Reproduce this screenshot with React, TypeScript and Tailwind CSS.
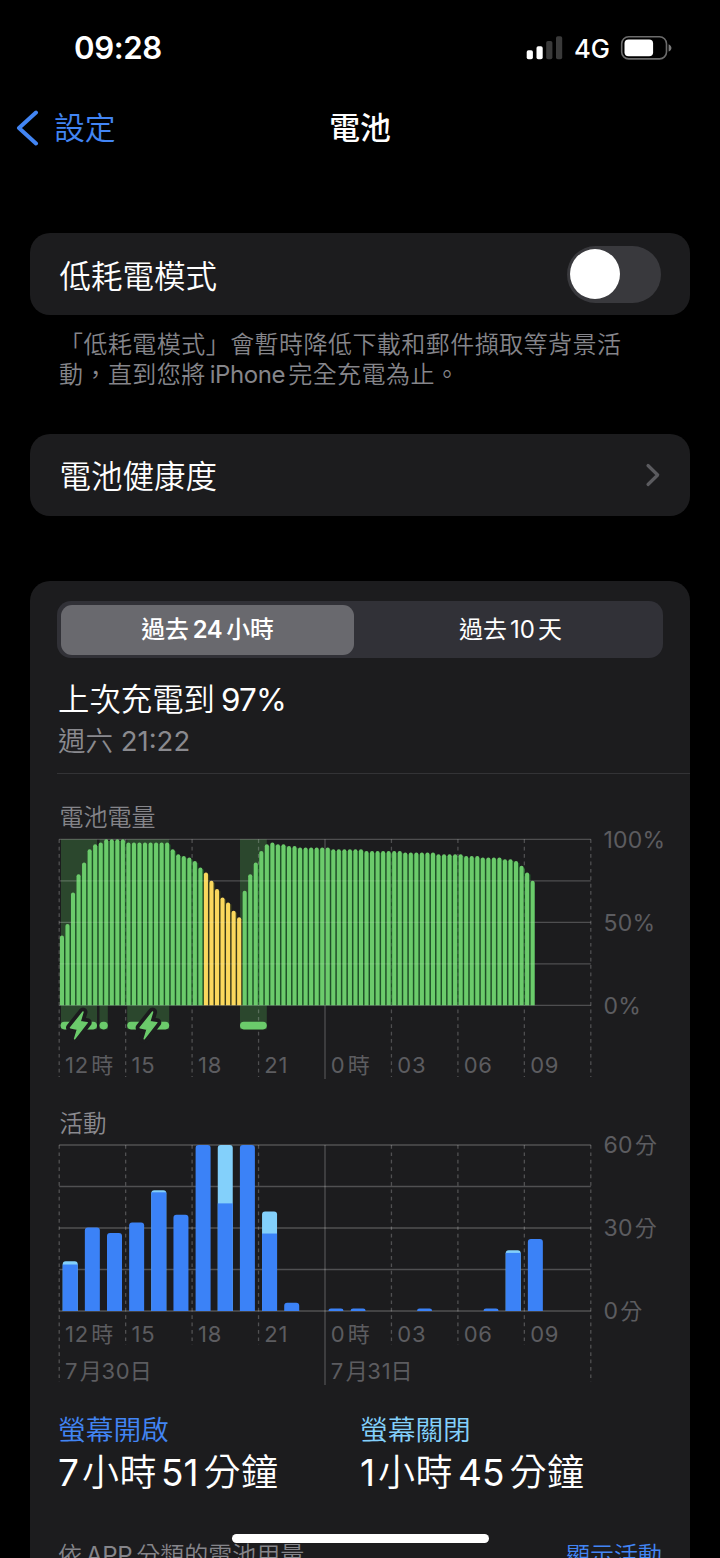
import type { ReactNode } from 'react';

const LEFT = 29.2;
const PLOT_W = 531.6;
const PLOT_H = 166;
const STEP = PLOT_W / 8;

const repeat = (value: number, count: number): number[] => Array(count).fill(value);

const levels: number[] = [
  42, 49, 68, 79, 86, 94, 97, 98, ...repeat(100, 4), ...repeat(98, 8),
  94, 91, 90, 89, 87, 83, 80, 75, 70, 65, 62, 57, 53,
  69, 79, 86, 93, 97, 98, 97, 97, ...repeat(96, 2), ...repeat(95, 6), ...repeat(94, 6),
  ...repeat(93, 7), ...repeat(92, 6), ...repeat(91, 5), ...repeat(90, 3), ...repeat(89, 4),
  ...repeat(88, 2), 87, 84, 80, 75,
];

const activity: { hour: number; on: number; total: number }[] = [
  { hour: 0, on: 16.8, total: 18 },
  { hour: 1, on: 30.2, total: 30.2 },
  { hour: 2, on: 28.2, total: 28.2 },
  { hour: 3, on: 32, total: 32 },
  { hour: 4, on: 42.9, total: 43.6 },
  { hour: 5, on: 34.8, total: 34.8 },
  { hour: 6, on: 60, total: 60 },
  { hour: 7, on: 38.9, total: 60 },
  { hour: 8, on: 60, total: 60 },
  { hour: 9, on: 28, total: 36 },
  { hour: 10, on: 3, total: 3 },
  { hour: 12, on: 0.9, total: 0.9 },
  { hour: 13, on: 0.9, total: 0.9 },
  { hour: 16, on: 0.9, total: 0.9 },
  { hour: 19, on: 0.9, total: 0.9 },
  { hour: 20, on: 21, total: 22 },
  { hour: 21, on: 26, total: 26 },
];

const hours: [string, string][] = [
  ['12', '時'], ['15', ''], ['18', ''], ['21', ''], ['0', '時'], ['03', ''], ['06', ''], ['09', ''],
];

const roundedTop = (x: number, y: number, w: number, h: number, r: number): string => {
  const c = Math.min(r, h);
  return `M${x} ${y + h}V${y + c}Q${x} ${y} ${x + c} ${y}H${x + w - c}Q${x + w} ${y} ${x + w} ${y + c}V${y + h}Z`;
};

function Gridlines({ top, tick, outer, midnight, opacity }: { top: number; tick: number; outer: number; midnight: number; opacity: number }) {
  return (
    <g stroke="#ffffff" strokeOpacity={opacity}>
      {[0, 1, 2, 3, 4].map((i) => (
        <line key={i} x1={LEFT} x2={LEFT + PLOT_W} y1={top + (i * PLOT_H) / 4} y2={top + (i * PLOT_H) / 4} strokeWidth="1.3" />
      ))}
      {[0, 1, 2, 3, 4, 5, 6, 7, 8].map((i) => {
        const x = LEFT + i * STEP;
        const end = i === 4 ? midnight : i % 8 === 0 ? outer : tick;
        return <line key={i} x1={x} x2={x} y1={top} y2={end} strokeWidth="1.3" strokeDasharray={i === 4 ? undefined : '3.7 3.7'} />;
      })}
    </g>
  );
}

function HourLabels({ y }: { y: number }) {
  return (
    <g>
      {hours.map(([num, unit], i) => (
        <text key={num} x={LEFT + i * STEP + 5.8} y={y}>
          {num}
          {unit && <tspan dx="2.2">{unit}</tspan>}
        </text>
      ))}
    </g>
  );
}

function Bolt({ x, y }: { x: number; y: number }) {
  const shape = 'M13.4 0.8 0.9 16.6 7.9 18 5 27.6 17.6 11.4 10.6 10.4Z';
  return (
    <g transform={`translate(${x} ${y})`} strokeLinejoin="round">
      <path d={shape} fill="#1c1c1e" stroke="#1c1c1e" strokeWidth="9" />
      <path d={shape} fill="#6bcb6b" stroke="#6bcb6b" strokeWidth="1.4" />
    </g>
  );
}

function BatteryChart() {
  const top = 9.3;
  const base = top + PLOT_H;
  return (
    <svg width="660" height="260" viewBox="0 0 660 260" className="block overflow-visible font-normal" fontSize="22" fill="#5c5c60" letterSpacing="0.8">
      <g fill="#2b472d">
        <rect x="31" y={top} width="36" height="190" />
        <rect x="69.5" y={top} width="8.3" height="190" />
        <rect x="97.2" y={top} width="42" height="190" />
        <rect x="210" y={top} width="26.8" height="190" />
      </g>
      <Gridlines top={top} tick={247} outer={247} midnight={249} opacity={0.13} />
      {levels.map((level, i) => {
        const h = (level / 100) * PLOT_H;
        const x = 29.9 + i * (PLOT_W / 96);
        const low = i >= 26 && i <= 32;
        return (
          <g key={i}>
            <rect x={x} y={base - h + 2} width={i === levels.length - 1 ? 4.1 : 5.5} height={h - 2} fill={low ? '#3c3d1a' : '#1d5126'} />
            <path d={roundedTop(x, base - h, 4.1, h, 2)} fill={low ? '#fbd85d' : '#6bcb6b'} />
          </g>
        );
      })}
      <Gridlines top={top} tick={247} outer={247} midnight={249} opacity={0.11} />
      <g fill="#6bcb6b">
        <rect x="30.5" y="191.8" width="36.5" height="7.6" rx="3.8" />
        <rect x="69.5" y="191.8" width="8.3" height="7.6" rx="3.8" />
        <rect x="97.2" y="191.8" width="42" height="7.6" rx="3.8" />
        <rect x="210" y="191.8" width="26.8" height="7.6" rx="3.8" />
      </g>
      <Bolt x={39.6} y={181.2} />
      <Bolt x={109.2} y={181.2} />
      <HourLabels y={243} />
      <g fontSize="23" letterSpacing="0.2">
        <text x="573.5" y="17.5">100%</text>
        <text x="573.5" y="100.5">50%</text>
        <text x="573.5" y="183.5">0%</text>
      </g>
    </svg>
  );
}

function DateLabel({ x, day }: { x: number; day: string }) {
  return (
    <text x={x} y="248.5">
      7<tspan dx="1.6">月</tspan><tspan dx="-1.2">{day}</tspan><tspan dx="-0.8">日</tspan>
    </text>
  );
}

function MinuteLabel({ y, value }: { y: number; value: string }) {
  return (
    <text x="573.5" y={y}>
      {value}<tspan dx="2" fontSize="22">分</tspan>
    </text>
  );
}

function ActivityChart() {
  const top = 15;
  const base = top + PLOT_H;
  return (
    <svg width="660" height="270" viewBox="0 0 660 270" className="block overflow-visible font-normal" fontSize="22" fill="#5c5c60" letterSpacing="0.8">
      <Gridlines top={top} tick={215} outer={252} midnight={255} opacity={0.23} />
      {activity.map(({ hour, on, total }) => {
        const x = 32.7 + hour * (PLOT_W / 24);
        const h = (total / 60) * PLOT_H;
        const onH = (on / 60) * PLOT_H;
        return (
          <g key={hour}>
            <path d={roundedTop(x, base - h, 15, h, 3)} fill={total > on ? '#83d0fb' : '#3b82f7'} />
            {total > on && <rect x={x} y={base - onH} width="15" height={onH} fill="#3b82f7" />}
          </g>
        );
      })}
      <HourLabels y={212} />
      <DateLabel x={LEFT + 5.8} day="30" />
      <DateLabel x={LEFT + 4 * STEP + 5.8} day="31" />
      <g fontSize="23" letterSpacing="0.3">
        <MinuteLabel y={23} value="60" />
        <MinuteLabel y={106} value="30" />
        <MinuteLabel y={189} value="0" />
      </g>
    </svg>
  );
}

function StatusBar() {
  return (
    <div className="flex h-[96px] shrink-0 items-center justify-between pl-[74px] pr-[48px]">
      <div className="text-[31.2px] leading-[40px] font-semibold tracking-[-0.4px]">09:28</div>
      <div className="flex items-center">
        <svg width="37" height="24" viewBox="0 0 37 24" className="block">
          <rect x="0.7" y="14.3" width="6.2" height="9" rx="1.8" fill="#fff" />
          <rect x="10.5" y="10.3" width="6.2" height="13" rx="1.8" fill="#fff" />
          <rect x="20.2" y="5" width="6.2" height="18.3" rx="1.8" fill="#3a3a3a" />
          <rect x="30" y="0.3" width="6.2" height="23" rx="1.8" fill="#3a3a3a" />
        </svg>
        <div className="ml-[11px] w-[46px] pt-[2px] text-[25.6px] leading-[30px] font-medium">4G</div>
        <svg width="52" height="26" viewBox="0 0 52 26" className="block">
          <rect x="1.7" y="1.7" width="44.8" height="22.2" rx="7" fill="none" stroke="#6c6c6c" strokeWidth="1.6" />
          <rect x="4.5" y="4.4" width="28.6" height="16.8" rx="4" fill="#fff" />
          <path d="M48.6 9.2c3.8 1.7 3.8 5.7 0 7.4Z" fill="#7a7a7a" />
        </svg>
      </div>
    </div>
  );
}

function Navbar() {
  return (
    <div className="grid h-[64px] shrink-0 grid-cols-3 items-center text-[30.8px] leading-[40px]">
      <div className="flex items-center text-[#4285f4]">
        <svg width="24" height="36" viewBox="0 0 24 36" className="mb-px ml-[16px] block">
          <path d="M20 2.5 3 18 20 33.5" fill="none" stroke="#4285f4" strokeWidth="4" strokeLinecap="round" strokeLinejoin="round" />
        </svg>
        <span className="ml-[14px]">設定</span>
      </div>
      <div className="text-center font-medium">電池</div>
    </div>
  );
}

function Card({ children }: { children: ReactNode }) {
  return (
    <div className="mx-[30px] flex h-[82px] items-center justify-between rounded-[20px] bg-[#1c1c1e] pr-[29px] pl-[29.5px] text-[31.5px] leading-[40px]">
      {children}
    </div>
  );
}

function Total({ color, label, children }: { color: string; label: string; children: ReactNode }) {
  return (
    <div className="w-[302px]">
      <div className={`text-[27.7px] leading-[36px] ${color}`}>{label}</div>
      <div className="mt-px text-[37px] leading-[48px] font-normal whitespace-nowrap">{children}</div>
    </div>
  );
}

export default function App() {
  return (
    <div className="relative flex h-[1558px] w-[720px] flex-col overflow-hidden bg-black font-['Inter','Noto_Sans_CJK_TC',sans-serif] font-[350] text-white">
      <div className="h-[160px] shrink-0">
        <StatusBar />
        <Navbar />
      </div>

      <div className="mt-[73px] shrink-0">
        <Card>
          <span className="pt-[5px]">低耗電模式</span>
          <div className="flex h-[57px] w-[94px] items-center rounded-full bg-[#39393d] pl-[3px]">
            <div className="size-[50px] rounded-full bg-white" />
          </div>
        </Card>
      </div>
      <div className="mt-[15px] ml-[59px] shrink-0 text-[24px] leading-[30px] tracking-[0.45px] whitespace-nowrap text-[#85858a]">
        <div>「低耗電模式」會暫時降低下載和郵件擷取等背景活</div>
        <div>動，直到您將<span className="mr-[3px] ml-[4px] font-normal tracking-[-0.4px]">iPhone</span>完全充電為止。</div>
      </div>

      <div className="mt-[44px] shrink-0">
        <Card>
          <span className="pt-[4px]">電池健康度</span>
          <svg width="16" height="26" viewBox="0 0 16 26" className="block">
            <path d="M3 3.5 12.7 13 3 22.5" fill="none" stroke="#5b5b5f" strokeWidth="3.2" strokeLinecap="round" strokeLinejoin="round" />
          </svg>
        </Card>
      </div>

      <div className="mx-[30px] mt-[65px] h-[1000px] shrink-0 rounded-t-[20px] bg-[#1c1c1e] pt-[20px]">
        <div className="mr-[27px] ml-[27px] flex h-[57px] rounded-[14px] bg-[#313137] py-[3.5px] pl-[4px] text-[23.8px] leading-[50px]">
          <div className="w-[293px] rounded-[11px] bg-[#69696e] text-center font-medium">過去<span className="mx-[4px] font-semibold tracking-[-0.4px]">24</span>小時</div>
          <div className="flex-1 pl-[4px] text-center text-[24px] font-normal">過去<span className="mx-[3px]">10</span>天</div>
        </div>
        <div className="mt-[21px] ml-[28px] text-[31.4px] leading-[43px]">上次充電到<span className="ml-[6px] font-normal tracking-[-0.8px]">97%</span></div>
        <div className="mt-px ml-[28px] text-[27.5px] leading-[36px] text-[#8a8a8f]">週六 <span className="font-normal">21:22</span></div>
        <div className="mt-[14px] ml-[27px] h-[1.3px] bg-[#333336]" />
        <div className="mt-[31px] ml-[29.5px] text-[24px] leading-[26px] text-[#85858a]">電池電量</div>
        <div className="-mt-px">
          <BatteryChart />
        </div>
        <div className="mt-[19px] ml-[29.5px] h-[21px] text-[23.5px] leading-[29px] text-[#8a8a8f]">活動</div>
        <ActivityChart />
        <div className="mt-[12px] ml-[28px] flex">
          <Total color="text-[#4285f4]" label="螢幕開啟">
            7<span className="ml-[3px] font-[350] tracking-[0.5px]">小時</span><span className="mr-[5px] ml-[4px]">51</span><span className="font-[350] tracking-[0.5px]">分鐘</span>
          </Total>
          <Total color="text-[#83d0fb]" label="螢幕關閉">
            1<span className="ml-[3px] font-[350] tracking-[0.5px]">小時</span><span className="mr-[5px] ml-[5px]">45</span><span className="font-[350] tracking-[0.5px]">分鐘</span>
          </Total>
        </div>
        <div className="mt-[42px] mr-[28px] ml-[28px] flex justify-between text-[24px] leading-[34px] text-[#85858a]">
          <span>依<span className="mx-[4px] font-normal tracking-[-0.3px]">APP</span>分類的電池用量</span>
          <span className="text-[#4285f4]">顯示活動</span>
        </div>
      </div>
      <div className="absolute top-[1534px] left-[232px] h-[9px] w-[257px] rounded-full bg-white" />
    </div>
  );
}
